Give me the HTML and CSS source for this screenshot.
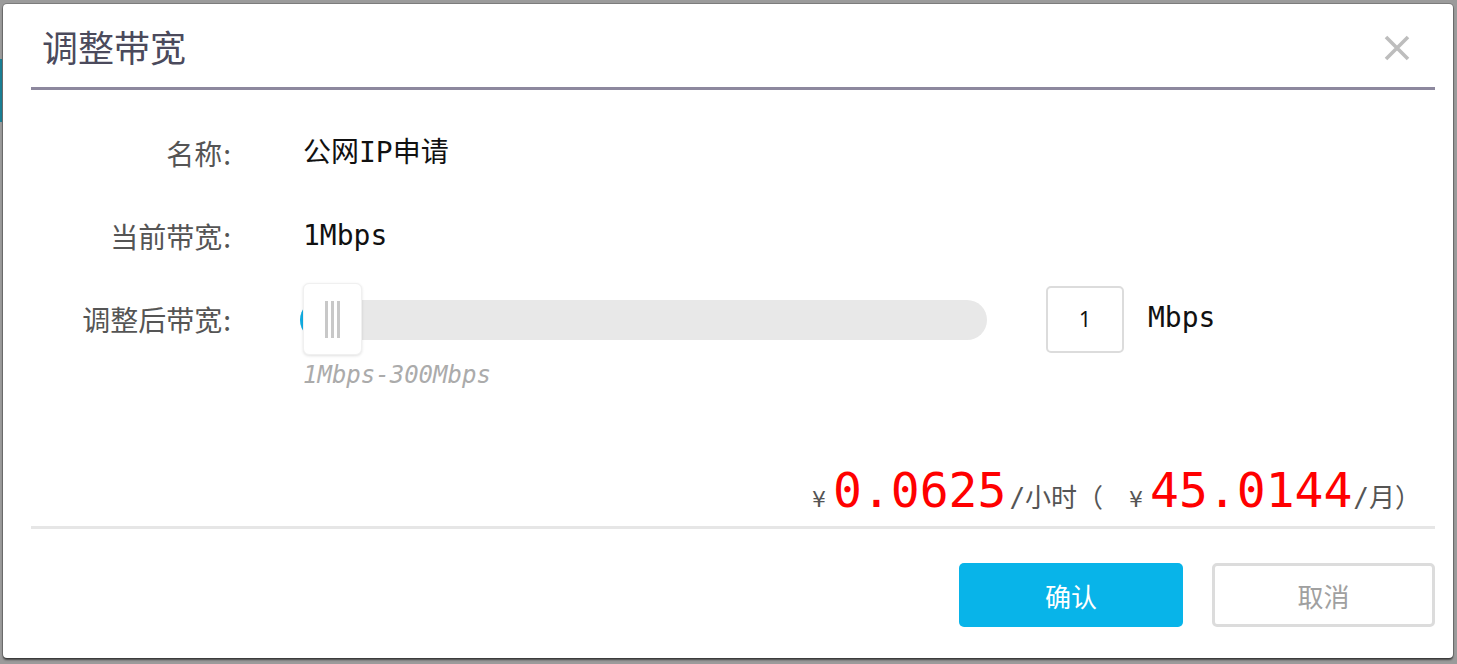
FILE: index.html
```html
<!DOCTYPE html>
<html lang="zh-CN">
<head>
<meta charset="utf-8">
<title>调整带宽</title>
<link rel="stylesheet" href="styles.css">
</head>
<body>
<div class="page-strip"></div>
<div class="dialog">
  <div class="dlg-header">
    <h2 class="dlg-title">调整带宽</h2>
    <button class="close" aria-label="关闭">
      <svg width="26" height="26" viewBox="0 0 26 26"><path d="M2 2 L24 24 M24 2 L2 24" stroke="#bdbdbd" stroke-width="3.6" stroke-linecap="butt" fill="none"/></svg>
    </button>
  </div>
  <div class="form">
    <div class="row r1">
      <div class="label">名称<span class="colon">:</span></div>
      <div class="value">公网IP申请</div>
    </div>
    <div class="row r2">
      <div class="label">当前带宽<span class="colon">:</span></div>
      <div class="value">1Mbps</div>
    </div>
    <div class="row r3">
      <div class="label">调整后带宽<span class="colon">:</span></div>
      <div class="value slider-cell">
        <div class="slider">
          <div class="track"><div class="fill"></div></div>
          <div class="handle"><i></i><i></i><i></i></div>
        </div>
        <div class="num-input">1</div>
        <span class="unit">Mbps</span>
      </div>
    </div>
    <div class="row hint-row">
      <div></div>
      <div class="hint">1Mbps-300Mbps</div>
    </div>
  </div>
  <div class="price">
    <span class="yen">¥</span><span class="big">0.0625</span><span class="per per-hour">/小时</span><span class="paren">（</span><span class="yen">¥</span><span class="big">45.0144</span><span class="per">/月）</span>
  </div>
  <div class="actions">
    <button class="btn btn-primary">确认</button>
    <button class="btn btn-default">取消</button>
  </div>
</div>
</body>
</html>
```
FILE: styles.css
```css
html, body {
  margin: 0;
  height: 664px;
  overflow: hidden;
}
body {
  background: #9b9b9b;
  padding: 4px 0 0 3px;
  box-sizing: border-box;
  font-family: "Noto Sans CJK SC", "Noto Sans", sans-serif;
  position: relative;
}
.page-strip {
  position: absolute;
  left: 0;
  top: 59px;
  width: 2px;
  height: 63px;
  background: #1a7f95;
}
.dialog {
  width: 1450px;
  height: 654px;
  background: #fff;
  border-radius: 4px;
  box-shadow: 0 2px 2px rgba(0,0,0,0.55), 0 0 0 1px rgba(0,0,0,0.2);
  padding: 0 18px 0 28px;
  box-sizing: border-box;
  display: flex;
  flex-direction: column;
  position: relative;
}
.dlg-header {
  height: 86px;
  box-sizing: border-box;
  border-bottom: 3px solid #8d889e;
  display: flex;
  align-items: center;
  justify-content: space-between;
  padding: 0 25px 0 11px;
}
.dlg-title {
  margin: 0;
  font-size: 36px;
  font-weight: 400;
  color: #4b4a5c;
  line-height: 1;
}
.close {
  border: 0;
  background: none;
  padding: 0;
  width: 26px;
  height: 26px;
  margin-top: 4px;
  filter: blur(0.4px);
}
.close svg { display: block; }

.form {
  padding-top: 43px;
  display: flex;
  flex-direction: column;
}
.row {
  display: grid;
  grid-template-columns: 201px 1fr;
  column-gap: 71px;
  align-items: center;
}
.r1, .r2 { height: 40px; }
.r2 { margin-top: 43px; }
.r3 { margin-top: 27px; height: 72px; }
.hint-row { margin-top: 8px; height: 24px; }
.label {
  text-align: right;
  font-size: 28px;
  color: #555;
  line-height: 40px;
  padding-right: 1px;
  white-space: nowrap;
}
.colon {
  margin-left: 1px;
}
.value {
  font-family: "DejaVu Sans Mono", "Noto Sans CJK SC", monospace;
  font-size: 28px;
  color: #111;
  line-height: 40px;
  white-space: nowrap;
}
.slider-cell {
  display: flex;
  align-items: center;
  height: 72px;
}
.slider {
  position: relative;
  width: 687px;
  height: 72px;
  margin-left: -3px;
  display: flex;
  align-items: center;
}
.track {
  width: 100%;
  height: 40px;
  border-radius: 20px;
  background: #e8e8e8;
  overflow: hidden;
  margin-top: 1px;
}
.fill {
  width: 20px;
  height: 100%;
  background: #10aee4;
}
.handle {
  position: absolute;
  left: 3px;
  top: 0;
  width: 59px;
  height: 72px;
  box-sizing: border-box;
  background: #fff;
  border: 1px solid #f0f0f0;
  border-radius: 6px;
  box-shadow: 0 1px 3px rgba(0,0,0,0.12);
  display: flex;
  justify-content: flex-start;
  align-items: center;
  gap: 3px;
  padding-left: 21px;
}
.handle i {
  display: block;
  width: 3px;
  height: 37px;
  background: #c8c8c8;
}
.num-input {
  margin-left: 59px;
  width: 78px;
  height: 67px;
  box-sizing: border-box;
  border: 2px solid #dcdcdc;
  border-radius: 5px;
  font-family: "Noto Sans", sans-serif;
  font-size: 21px;
  color: #111;
  display: flex;
  align-items: center;
  justify-content: center;
}
.unit {
  margin-left: 24px;
  font-size: 28px;
  color: #111;
  margin-top: -2px;
}
.hint {
  font-family: "DejaVu Sans Mono", monospace;
  font-style: italic;
  font-size: 24px;
  color: #ababab;
  line-height: 24px;
}

.price {
  margin-top: 79px;
  height: 63px;
  box-sizing: border-box;
  border-bottom: 3px solid #e6e6e6;
  display: flex;
  justify-content: flex-end;
  align-items: baseline;
  padding-right: 14px;
  line-height: 48px;
  white-space: nowrap;
}
.yen {
  font-family: "DejaVu Sans", sans-serif;
  font-size: 22px;
  color: #555;
  margin-right: 7px;
}
.big {
  font-family: "DejaVu Sans Mono", monospace;
  font-size: 48px;
  color: #ff0000;
}
.per {
  font-family: "DejaVu Sans Mono", "Noto Sans CJK SC", monospace;
  font-size: 26px;
  color: #555;
  margin-left: 1px;
}
.per-hour {
  margin-left: 3px;
}
.paren {
  font-family: "Noto Sans CJK SC", sans-serif;
  font-size: 26px;
  color: #555;
  margin-right: 26px;
}

.actions {
  margin-top: 34px;
  display: flex;
  justify-content: flex-end;
  gap: 29px;
}
.btn {
  height: 64px;
  border-radius: 5px;
  font-family: "Noto Sans CJK SC", sans-serif;
  font-size: 26px;
  box-sizing: border-box;
  padding: 0;
  cursor: pointer;
}
.btn-primary {
  width: 224px;
  background: #08b4e9;
  color: #fff;
  border: 0;
}
.btn-default {
  width: 223px;
  background: #fff;
  color: #a0a0a0;
  border: 3px solid #dcdcdc;
}
```
